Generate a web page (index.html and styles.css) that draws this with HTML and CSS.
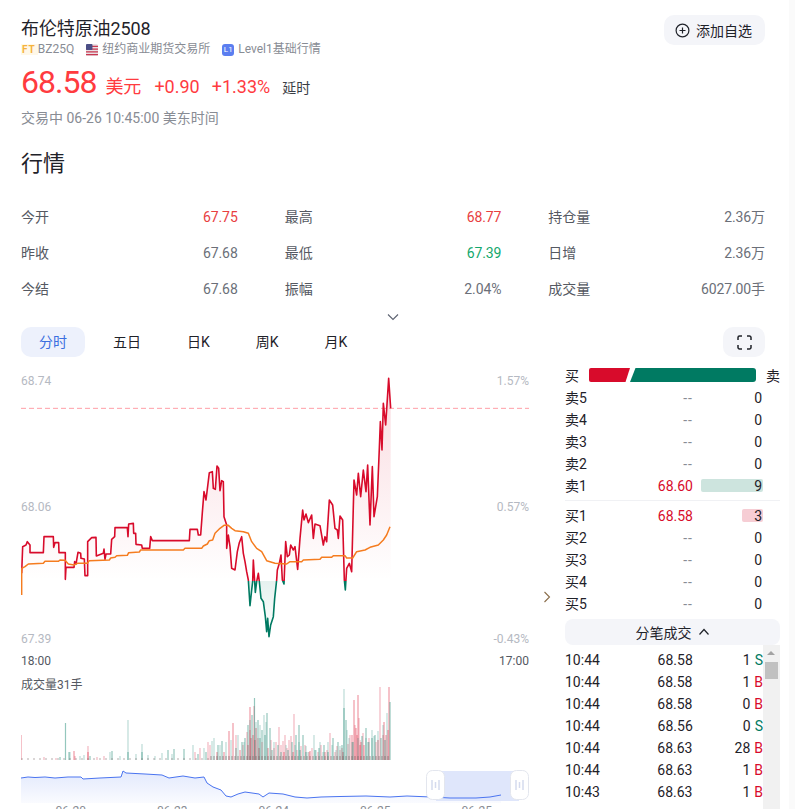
FILE: index.html
```html
<!DOCTYPE html>
<html lang="zh-CN">
<head>
    <meta charset="UTF-8">
    <title>布伦特原油2508</title>
    <link rel="stylesheet" href="styles.css">
</head>
<body>
<div class="page">
    <header class="head">
        <div>
            <h1 class="title">布伦特原油2508</h1>
            <div class="meta">
                <span class="meta-item"><span class="ft">FT</span>BZ25Q</span>
                <span class="meta-item">
                    <svg class="flag" width="12" height="12" viewBox="0 0 13 13">
                        <rect width="13" height="13" rx="2" fill="#e9dfe3"/>
                        <path d="M0 2.500h13M0 5.500h13M0 8.500h13M0 11.500h13" stroke="#c8374f" stroke-width="1.400"/>
                        <rect width="7" height="6.500" rx="1" fill="#4b4f86"/>
                    </svg>纽约商业期货交易所
                </span>
                <span class="meta-item"><span class="lvl">L1</span>Level1基础行情</span>
            </div>
            <div class="quote">
                <span class="price">68.58</span>
                <span class="unit">美元</span>
                <span class="chg">+0.90</span>
                <span class="chg">+1.33%</span>
                <span class="delay">延时</span>
            </div>
            <div class="status">交易中 06-26 10:45:00 美东时间</div>
        </div>
        <button class="watch">
            <svg width="15" height="15" viewBox="0 0 15 15" fill="none" stroke="#1f2229" stroke-width="1.200">
                <circle cx="7.500" cy="7.500" r="6.400"/>
                <path d="M7.500 4.500v6M4.500 7.500h6"/>
            </svg>
            添加自选
        </button>
    </header>

    <h2 class="section">行情</h2>

    <div class="stats">
        <div class="stat"><span>今开</span><b class="up">67.75</b></div>
        <div class="stat"><span>最高</span><b class="up">68.77</b></div>
        <div class="stat"><span>持仓量</span><b>2.36万</b></div>
        <div class="stat"><span>昨收</span><b>67.68</b></div>
        <div class="stat"><span>最低</span><b class="down">67.39</b></div>
        <div class="stat"><span>日增</span><b>2.36万</b></div>
        <div class="stat"><span>今结</span><b>67.68</b></div>
        <div class="stat"><span>振幅</span><b>2.04%</b></div>
        <div class="stat"><span>成交量</span><b>6027.00手</b></div>
    </div>

    <div class="more">
        <svg width="12" height="8" viewBox="0 0 12 8" fill="none" stroke="#5c6270" stroke-width="1.100"><path d="M1 1.500l5 5 5-5"/></svg>
    </div>

    <div class="toolbar">
        <div class="tabs">
            <span class="tab active">分时</span>
            <span class="tab">五日</span>
            <span class="tab">日K</span>
            <span class="tab">周K</span>
            <span class="tab">月K</span>
        </div>
        <button class="full">
            <svg width="15" height="15" viewBox="0 0 15 15" fill="none" stroke="#1f2229" stroke-width="1.500">
                <path d="M1 5V2.500A1.500 1.500 0 0 1 2.500 1H5M10 1h2.500A1.500 1.500 0 0 1 14 2.500V5M14 10v2.500a1.500 1.500 0 0 1-1.500 1.500H10M5 14H2.500A1.500 1.500 0 0 1 1 12.500V10"/>
            </svg>
        </button>
    </div>

    <div class="main">
        <div class="left">
            <div class="chart">
                <!-- coords below are 3x page coords -->
                <svg class="chart-svg" width="508" height="280" viewBox="63 30 1524 840">
                    <defs>
                        <linearGradient id="lineCol" gradientUnits="userSpaceOnUse" x1="0" y1="55" x2="0" y2="830">
                            <stop offset=".7845" stop-color="#d80b2b"/>
                            <stop offset=".7845" stop-color="#007a62"/>
                        </linearGradient>
                        <linearGradient id="areaCol" gradientUnits="userSpaceOnUse" x1="0" y1="55" x2="0" y2="830">
                            <stop offset="0" stop-color="#d80b2b" stop-opacity=".15"/>
                            <stop offset=".7845" stop-color="#d80b2b" stop-opacity="0"/>
                            <stop offset=".7845" stop-color="#007a62" stop-opacity=".1"/>
                            <stop offset="1" stop-color="#007a62" stop-opacity="0"/>
                        </linearGradient>
                    </defs>
                    <polygon fill="url(#areaCol)" points="65,663 65,640 68,560 78,555 82,545 90,555 90,578 130,578 132,530 160,530 161,562 165,548 176,548 177,578 196,578 196,658 198,622 222,622 224,605 228,612 234,577 242,580 243,595 253,597 255,647 263,647 263,545 275,533 288,532 289,588 310,580 312,567 315,598 318,582 332,582 335,538 344,530 345,503 382,503 384,530 386,492 400,490 401,520 407,520 408,553 425,555 427,565 449,565 452,530 457,542 568,542 570,508 592,508 595,525 602,525 607,458 612,395 618,420 628,338 637,335 640,385 646,388 651,318 656,325 660,392 665,362 670,365 672,470 680,495 680,565 685,525 690,560 695,625 705,630 712,575 718,548 725,530 730,580 735,605 740,635 745,660 750,737 755,690 758,665 760,600 764,665 766,697 770,665 775,640 778,665 783,715 790,725 796,770 800,815 803,775 807,830 812,795 820,770 824,715 830,660 832,630 838,610 843,585 847,660 852,672 857,545 862,590 868,585 872,555 880,570 885,560 893,628 900,535 908,450 912,480 918,462 925,488 935,465 940,535 945,492 960,497 970,555 975,530 980,545 988,420 998,435 1005,505 1012,510 1015,535 1020,468 1028,480 1033,660 1036,690 1040,625 1048,610 1055,635 1062,360 1070,405 1075,340 1082,410 1090,330 1098,395 1103,315 1110,495 1117,320 1122,470 1132,410 1138,265 1141,185 1146,270 1150,130 1157,195 1166,55 1172,145 1172,663"/>
                    <line x1="63" y1="145" x2="1587" y2="145" stroke="#ff9ea6" stroke-width="3" stroke-dasharray="15 9"/>
                    <polyline fill="none" stroke="url(#lineCol)" stroke-width="4.800" stroke-linejoin="round" points="65,640 68,560 78,555 82,545 90,555 90,578 130,578 132,530 160,530 161,562 165,548 176,548 177,578 196,578 196,658 198,622 222,622 224,605 228,612 234,577 242,580 243,595 253,597 255,647 263,647 263,545 275,533 288,532 289,588 310,580 312,567 315,598 318,582 332,582 335,538 344,530 345,503 382,503 384,530 386,492 400,490 401,520 407,520 408,553 425,555 427,565 449,565 452,530 457,542 568,542 570,508 592,508 595,525 602,525 607,458 612,395 618,420 628,338 637,335 640,385 646,388 651,318 656,325 660,392 665,362 670,365 672,470 680,495 680,565 685,525 690,560 695,625 705,630 712,575 718,548 725,530 730,580 735,605 740,635 745,660 750,737 755,690 758,665 760,600 764,665 766,697 770,665 775,640 778,665 783,715 790,725 796,770 800,815 803,775 807,830 812,795 820,770 824,715 830,660 832,630 838,610 843,585 847,660 852,672 857,545 862,590 868,585 872,555 880,570 885,560 893,628 900,535 908,450 912,480 918,462 925,488 935,465 940,535 945,492 960,497 970,555 975,530 980,545 988,420 998,435 1005,505 1012,510 1015,535 1020,468 1028,480 1033,660 1036,690 1040,625 1048,610 1055,635 1062,360 1070,405 1075,340 1082,410 1090,330 1098,395 1103,315 1110,495 1117,320 1122,470 1132,410 1138,265 1141,185 1146,270 1150,130 1157,195 1166,55 1172,145"/>
                    <polyline fill="none" stroke="#f57c1f" stroke-width="4.500" stroke-linejoin="round" points="65,705 65,625 75,620 85,612 130,610 135,604 175,604 180,600 195,601 205,612 222,615 232,610 262,610 268,602 328,600 332,594 345,592 350,587 382,586 386,578 418,576 422,570 550,570 555,565 605,565 610,558 622,552 628,542 638,540 645,520 660,505 672,496 685,496 695,505 705,512 730,515 745,520 755,545 770,565 785,575 800,602 825,610 860,612 870,605 905,605 910,600 960,598 965,592 995,592 1000,587 1035,587 1040,594 1058,594 1070,575 1095,570 1110,562 1135,555 1150,540 1160,525 1170,500"/>
                </svg>
                <span class="ax ax-t">68.74</span>
                <span class="ax ax-t ax-r">1.57%</span>
                <span class="ax ax-m">68.06</span>
                <span class="ax ax-m ax-r">0.57%</span>
                <span class="ax ax-b">67.39</span>
                <span class="ax ax-b ax-r">-0.43%</span>
            </div>
            <div class="times"><span>18:00</span><span>17:00</span></div>
            <div class="volume">
                <span class="vol-title">成交量31手</span>
                <svg class="chart-svg" width="508" height="90" viewBox="21 670 508 90" fill="none">
                    <path stroke="#d80b2b" stroke-opacity=".22" stroke-width="1.600" d="M254 760V706M294 760V714M279 760V727M285 760V735M330 760V733M250 760V730M380 760V687M360 760V740M350 760V735M271 760V740M276 760V742M289 760V740M305 760V745M236 760V735M210 760V745M200 760V748M195 760V752M88 760V746M44 760V757M56 760V758M75 760V756M97 760V757M104 760V756M208 760V742M243 760V745M247 760V732M258 760V738M262 760V742M283 760V741M301 760V746M312 760V748M321 760V745M337 760V746M340 760V750M348 760V744M363 760V733M369 760V738M376 760V742M383 760V735M274 760V748M281 760V745M287 760V748M291 760V736M297 760V750M309 760V752M318 760V752M327 760V750M335 760V752M342 760V748M355 760V725M359 760V718"/>
                    <path stroke="#d80b2b" stroke-opacity=".42" stroke-width="1.200" d="M21 760V735M389 760V687M358 760V695M354 760V700M250 760V707M233 760V723M229 760V731M384 760V722M74 760V751M88 760V752M253 760V735M256 760V728M356 760V728M352 760V735M361 760V742M364 760V745M378 760V740M386 760V735M343 760V752M325 760V752M310 760V751M268 760V748M240 760V750M224 760V752M217 760V752M251 760V738M255 760V740M293 760V752M284 760V752M357 760V735M248 760V745M259 760V748M354 760V742M360 760V745M388 760V730"/>
                    <path stroke="#007a62" stroke-opacity=".2" stroke-width="1.600" d="M128 760V720M264 760V715M387 760V713M344 760V689M142 760V744M214 760V738M162 760V753M193 760V745M204 760V748M226 760V742M220 760V745M231 760V740M238 760V735M260 760V725M299 760V742M316 760V750M320 760V742M332 760V745M372 760V730M378 760V731M383 760V725M110 760V752M84 760V755M80 760V756M70 760V752M120 760V756M136 760V754M148 760V755M155 760V756M172 760V754M212 760V741M306 760V746M314 760V735M328 760V742M340 760V746M349 760V738M366 760V738M244 760V742M250 760V720M256 760V722M266 760V722M274 760V742M286 760V745M295 760V745M308 760V752M323 760V752M336 760V750M347 760V730M352 760V742M358 760V738M369 760V742M374 760V736"/>
                    <path stroke="#007a62" stroke-opacity=".42" stroke-width="1.200" d="M65.500 760V723M344 760V708M254.500 760V698M267 760V713M299 760V725M366 760V728M372 760V738M184 760V749M174 760V749M168 760V750M112 760V751M69 760V752M128 760V752M142 760V752M218 760V745M222 760V741M242 760V742M248 760V725M252 760V715M258 760V720M262 760V730M265 760V735M270 760V728M278 760V745M292 760V742M296 760V735M303 760V735M319 760V748M324 760V745M333 760V738M338 760V742M346 760V720M353 760V742M362 760V736M368 760V742M375 760V735M381 760V738M385 760V740M390 760V702M236 760V748M206 760V752M198 760V754M90 760V756M60 760V757M245 760V738M260 760V738M272 760V750M281 760V752M288 760V750M300 760V750M306 760V752M315 760V750M328 760V752M342 760V745"/>
                    <path stroke="#6b5a5a" stroke-opacity=".3" stroke-width="4" stroke-dasharray="2 1" d="M210 758H390"/>
                    <path stroke="#6b5a5a" stroke-opacity=".25" stroke-width="2" stroke-dasharray="2 4" d="M21 759H210"/>
                </svg>
            </div>
            <div class="slider">
                <svg class="chart-svg" width="508" height="37" viewBox="21 766 508 37">
                    <defs>
                        <linearGradient id="navFill" x1="0" y1="0" x2="0" y2="1">
                            <stop offset="0" stop-color="#4a74f0" stop-opacity=".16"/>
                            <stop offset="1" stop-color="#4a74f0" stop-opacity="0"/>
                        </linearGradient>
                    </defs>
                    <polygon fill="url(#navFill)" points="21,778 35,777 55,778 81,777 83,779 121,777 123,771 126,773 145,774 162,775 169,778 183,776 195,778 204,777 207,783 221,790 226,796 231,797 245,792 259,794 263,797 269,793 283,794 307,798 321,797 366,796 390,797 407,796 431,797 476,798 501,795 501,810 21,810"/>
                    <rect x="436" y="771" width="83" height="30" fill="#dfe6fb"/>
                    <polyline fill="none" stroke="#4a74f0" stroke-width="1" points="21,778 28,777 35,777.500 45,777 55,778 68,777 81,777 83,779 100,778 121,777 123,771 126,773 145,774 162,775 169,778 183,776 195,778 204,777 207,783 213,787 221,790 226,796 231,797 238,794 245,792 252,793 259,794 263,797 269,793 283,794 295,797 307,798 321,797 340,796.500 366,796 390,797 407,796 431,797 450,798 476,798 490,797 501,795"/>
                    <rect x="426.500" y="770.500" width="18" height="29" rx="6" fill="#fff" stroke="#e3e6ee"/>
                    <rect x="510.500" y="770.500" width="18" height="29" rx="6" fill="#fff" stroke="#e3e6ee"/>
                    <path stroke="#d5dbee" stroke-width="1.500" d="M432 780v10M435.500 782v6M439 780v10M516 780v10M519.500 782v6M523 780v10"/>
                </svg>
            </div>
            <div class="dates"><span>06-20</span><span>06-23</span><span>06-24</span><span>06-25</span><span>06-25</span></div>
        </div>

        <div class="side-arrow">
            <svg width="8" height="12" viewBox="0 0 8 12" fill="none" stroke="#8a6d4a" stroke-width="1.100"><path d="M1.500 1l5 5-5 5"/></svg>
        </div>

        <div class="right">
            <div class="ratio">
                <span>买</span>
                <svg width="167" height="14" viewBox="0 0 167 14">
                    <path d="M2 0H41L36.500 14H2A2 2 0 0 1 0 12V2A2 2 0 0 1 2 0Z" fill="#d80b2b"/>
                    <path d="M46.500 0H164A3 3 0 0 1 167 3V11A3 3 0 0 1 164 14H41Z" fill="#007a62"/>
                </svg>
                <span>卖</span>
            </div>
            <div class="book">
                <div class="row"><span class="lab">卖5</span><span class="px none">--</span><span class="qty">0</span></div>
                <div class="row"><span class="lab">卖4</span><span class="px none">--</span><span class="qty">0</span></div>
                <div class="row"><span class="lab">卖3</span><span class="px none">--</span><span class="qty">0</span></div>
                <div class="row"><span class="lab">卖2</span><span class="px none">--</span><span class="qty">0</span></div>
                <div class="row"><span class="lab">卖1</span><span class="px red">68.60</span><span class="qty"><i class="fill sell" style="width:62px"></i>9</span></div>
            </div>
            <div class="book book-buy">
                <div class="row"><span class="lab">买1</span><span class="px red">68.58</span><span class="qty"><i class="fill buy" style="width:21px"></i>3</span></div>
                <div class="row"><span class="lab">买2</span><span class="px none">--</span><span class="qty">0</span></div>
                <div class="row"><span class="lab">买3</span><span class="px none">--</span><span class="qty">0</span></div>
                <div class="row"><span class="lab">买4</span><span class="px none">--</span><span class="qty">0</span></div>
                <div class="row"><span class="lab">买5</span><span class="px none">--</span><span class="qty">0</span></div>
            </div>
            <button class="ticks-btn">
                分笔成交
                <svg width="12" height="8" viewBox="0 0 12 8" fill="none" stroke="#1f2229" stroke-width="1.200"><path d="M1.500 6.500l4.500-5 4.500 5"/></svg>
            </button>
            <div class="ticks">
                <div class="tick-list">
                    <div class="tick"><span class="tm">10:44</span><span class="tp">68.58</span><span class="tv">1</span><span class="ts s">S</span></div>
                    <div class="tick"><span class="tm">10:44</span><span class="tp">68.58</span><span class="tv">1</span><span class="ts b">B</span></div>
                    <div class="tick"><span class="tm">10:44</span><span class="tp">68.58</span><span class="tv">0</span><span class="ts b">B</span></div>
                    <div class="tick"><span class="tm">10:44</span><span class="tp">68.56</span><span class="tv">0</span><span class="ts s">S</span></div>
                    <div class="tick"><span class="tm">10:44</span><span class="tp">68.63</span><span class="tv">28</span><span class="ts b">B</span></div>
                    <div class="tick"><span class="tm">10:44</span><span class="tp">68.63</span><span class="tv">1</span><span class="ts b">B</span></div>
                    <div class="tick"><span class="tm">10:43</span><span class="tp">68.63</span><span class="tv">1</span><span class="ts b">B</span></div>
                </div>
                <div class="bar"><i class="bar-up"></i><i class="bar-thumb"></i></div>
            </div>
        </div>
    </div>
</div>
</body>
</html>
```

FILE: styles.css
```css
* {
    box-sizing: border-box;
}
html, body {
    margin: 0;
    height: 809px;
    overflow: hidden;
    background: #fafafa;
}
body {
    font-family: Roboto, "Noto Sans CJK SC", sans-serif;
    font-size: 14px;
    color: #1f2229;
}
button {
    font-family: inherit;
    border: 0;
    cursor: pointer;
}
.page {
    width: 789px;
    height: 809px;
    padding: 0 24px 0 21px;
    background: #fff;
}

/* header */
.head {
    display: flex;
    justify-content: space-between;
    align-items: flex-start;
}
.title {
    margin: 0;
    padding-top: 17px;
    font-size: 18px;
    font-weight: 400;
    line-height: 24px;
    letter-spacing: -.1px;
}
.meta {
    display: flex;
    gap: 12px;
    height: 17px;
    font-size: 12px;
    line-height: 17px;
    color: #888c94;
}
.meta-item {
    display: flex;
    align-items: center;
}
.ft {
    padding: 0 2px 0 1px;
    font-size: 10px;
    font-weight: 700;
    letter-spacing: 1px;
    line-height: 11px;
    color: #f5b23d;
    background: #fff8e8;
}
.flag {
    margin-right: 4px;
}
.lvl {
    width: 12px;
    height: 12px;
    margin-right: 4px;
    border-radius: 3px;
    font-size: 8px;
    line-height: 12px;
    text-align: center;
    color: #fff;
    background: #5b7ef0;
}
.quote {
    display: flex;
    align-items: baseline;
    height: 46px;
    padding-top: 3px;
    color: #ff3b3f;
}
.price {
    font-size: 32px;
    line-height: 42px;
    letter-spacing: -1px;
}
.unit {
    margin-left: 9px;
    margin-right: 1px;
    font-size: 18px;
}
.chg {
    margin-left: 12px;
    font-size: 18px;
}
.delay {
    margin-left: 12px;
    font-size: 14px;
    color: #3a3d44;
}
.status {
    margin-top: 4px;
    line-height: 20px;
    font-size: 14px;
    color: #888c94;
}
.watch {
    display: flex;
    align-items: center;
    gap: 6px;
    height: 30px;
    margin-top: 15px;
    padding: 0 13px 0 11px;
    border-radius: 10px;
    font-size: 14px;
    color: #1f2229;
    background: #f4f5f9;
}
.section {
    margin: 20px 0 0;
    font-size: 22px;
    font-weight: 400;
    line-height: 32px;
}

/* stats */
.stats {
    display: grid;
    grid-template-columns: repeat(3, 1fr);
    column-gap: 47px;
    margin-top: 19px;
}
.stat {
    display: flex;
    justify-content: space-between;
    height: 36px;
    line-height: 36px;
    color: #555962;
}
.stat b {
    font-weight: 400;
    letter-spacing: -.1px;
    color: #6b6f78;
}
.stat b.up {
    color: #e8403f;
}
.stat b.down {
    color: #14a76c;
}
.more {
    display: flex;
    justify-content: center;
    align-items: center;
    height: 20px;
}
.toolbar {
    display: flex;
    justify-content: space-between;
}
.tabs {
    display: flex;
    gap: 10px;
}
.tab {
    height: 30px;
    padding: 0 18px;
    border-radius: 10px;
    line-height: 30px;
}
.tab.active {
    color: #3b6fe0;
    background: #edf1fc;
}
.full {
    display: flex;
    align-items: center;
    justify-content: center;
    width: 42px;
    height: 30px;
    border-radius: 10px;
    background: #f4f5f9;
}

/* chart */
.main {
    display: flex;
    margin-top: 10px;
}
.left {
    flex: none;
    width: 508px;
    padding-top: 3px;
}
.chart {
    position: relative;
    height: 280px;
}
.chart-svg {
    display: block;
}
.ax {
    position: absolute;
    left: 0;
    font-size: 12px;
    line-height: 16px;
    color: #b5b9c2;
}
.ax-r {
    left: auto;
    right: 0;
}
.ax-t {
    top: 3px;
}
.ax-m {
    top: 129px;
}
.ax-b {
    top: 261px;
}
.times {
    display: flex;
    justify-content: space-between;
    height: 20px;
    padding-top: 1px;
    font-size: 12px;
    line-height: 20px;
    color: #555962;
}
.volume {
    position: relative;
    height: 90px;
}
.vol-title {
    position: absolute;
    top: 7px;
    left: 0;
    font-size: 12px;
    line-height: 16px;
    color: #555962;
}
.slider {
    margin-top: 6px;
}
.dates {
    display: flex;
    margin-left: -1px;
    font-size: 12px;
    line-height: 16px;
    color: #888c94;
}
.dates span {
    width: 101.5px;
    text-align: center;
}
.side-arrow {
    flex: none;
    display: flex;
    justify-content: center;
    width: 36px;
    height: 240px;
    padding-top: 224px;
}

/* order book */
.right {
    flex: none;
    width: 215px;
}
.ratio {
    display: flex;
    justify-content: space-between;
    align-items: center;
    height: 20px;
    margin-top: -2px;
}
.ratio svg {
    margin-left: -1px;
}
.book {
    padding-top: 2px;
}
.book-buy {
    margin-top: 3px;
    padding-top: 4px;
    border-top: 1px solid #f0f1f4;
}
.row {
    display: flex;
    height: 22px;
    line-height: 22px;
}
.lab {
    width: 56px;
}
.px {
    width: 72px;
    text-align: right;
}
.px.none {
    letter-spacing: 1px;
    color: #888c94;
}
.px.red {
    color: #d80b2b;
}
.qty {
    position: relative;
    z-index: 0;
    width: 69px;
    text-align: right;
}
.fill {
    position: absolute;
    top: 4px;
    right: -1px;
    height: 13px;
    border-radius: 2px;
    z-index: -1;
}
.fill.sell {
    background: #cde4de;
}
.fill.buy {
    background: #f6cdd4;
}
.ticks-btn {
    display: flex;
    justify-content: center;
    align-items: center;
    gap: 6px;
    width: 100%;
    height: 26px;
    margin-top: 4px;
    border-radius: 8px;
    font-size: 14px;
    color: #1f2229;
    background: #f4f5f9;
}

/* trades */
.ticks {
    display: flex;
    justify-content: space-between;
}
.tick-list {
    width: 198px;
    padding-top: 4px;
}
.tick {
    display: flex;
    height: 22px;
    line-height: 22px;
}
.tm {
    width: 56px;
}
.tp {
    width: 72px;
    text-align: right;
}
.tv {
    width: 58px;
    text-align: right;
}
.ts {
    margin-left: 4px;
}
.ts.s {
    color: #007a62;
}
.ts.b {
    color: #d80b2b;
}
.bar {
    position: relative;
    width: 17px;
    height: 170px;
    background: #f1f1f1;
}
.bar-up {
    position: absolute;
    top: 6px;
    left: 4px;
    border: 4px solid transparent;
    border-top: 0;
    border-bottom: 4px solid #a3a3a3;
}
.bar-thumb {
    position: absolute;
    top: 17px;
    left: 2px;
    width: 13px;
    height: 17px;
    background: #c1c1c1;
}
```
